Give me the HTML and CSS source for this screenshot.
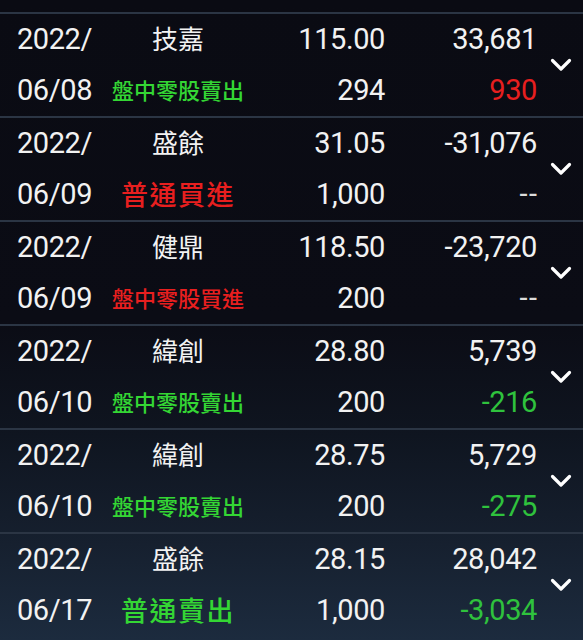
FILE: index.html
```html
<!DOCTYPE html>
<html lang="zh-Hant">
<head>
<meta charset="utf-8">
<title>交易紀錄</title>
<link rel="stylesheet" href="styles.css">
</head>
<body>
<div class="list">
  <div class="row">
    <div class="cell date">2022/</div>
    <div class="cell name">技嘉</div>
    <div class="cell num">115.00</div>
    <div class="cell num">33,681</div>
    <div class="chev"><svg width="22" height="14" viewBox="0 0 22 14"><polyline points="2.5,2.5 11,11 19.5,2.5" fill="none" stroke="#fff" stroke-width="3.2" stroke-linecap="round" stroke-linejoin="round"/></svg></div>
    <div class="cell date">06/08</div>
    <div class="cell type small green">盤中零股賣出</div>
    <div class="cell num">294</div>
    <div class="cell num red">930</div>
  </div>
  <div class="row">
    <div class="cell date">2022/</div>
    <div class="cell name">盛餘</div>
    <div class="cell num">31.05</div>
    <div class="cell num">-31,076</div>
    <div class="chev"><svg width="22" height="14" viewBox="0 0 22 14"><polyline points="2.5,2.5 11,11 19.5,2.5" fill="none" stroke="#fff" stroke-width="3.2" stroke-linecap="round" stroke-linejoin="round"/></svg></div>
    <div class="cell date">06/09</div>
    <div class="cell type big red">普通買進</div>
    <div class="cell num">1,000</div>
    <div class="cell num dim">--</div>
  </div>
  <div class="row">
    <div class="cell date">2022/</div>
    <div class="cell name">健鼎</div>
    <div class="cell num">118.50</div>
    <div class="cell num">-23,720</div>
    <div class="chev"><svg width="22" height="14" viewBox="0 0 22 14"><polyline points="2.5,2.5 11,11 19.5,2.5" fill="none" stroke="#fff" stroke-width="3.2" stroke-linecap="round" stroke-linejoin="round"/></svg></div>
    <div class="cell date">06/09</div>
    <div class="cell type small red">盤中零股買進</div>
    <div class="cell num">200</div>
    <div class="cell num dim">--</div>
  </div>
  <div class="row">
    <div class="cell date">2022/</div>
    <div class="cell name">緯創</div>
    <div class="cell num">28.80</div>
    <div class="cell num">5,739</div>
    <div class="chev"><svg width="22" height="14" viewBox="0 0 22 14"><polyline points="2.5,2.5 11,11 19.5,2.5" fill="none" stroke="#fff" stroke-width="3.2" stroke-linecap="round" stroke-linejoin="round"/></svg></div>
    <div class="cell date">06/10</div>
    <div class="cell type small green">盤中零股賣出</div>
    <div class="cell num">200</div>
    <div class="cell num green2">-216</div>
  </div>
  <div class="row">
    <div class="cell date">2022/</div>
    <div class="cell name">緯創</div>
    <div class="cell num">28.75</div>
    <div class="cell num">5,729</div>
    <div class="chev"><svg width="22" height="14" viewBox="0 0 22 14"><polyline points="2.5,2.5 11,11 19.5,2.5" fill="none" stroke="#fff" stroke-width="3.2" stroke-linecap="round" stroke-linejoin="round"/></svg></div>
    <div class="cell date">06/10</div>
    <div class="cell type small green">盤中零股賣出</div>
    <div class="cell num">200</div>
    <div class="cell num green2">-275</div>
  </div>
  <div class="row">
    <div class="cell date">2022/</div>
    <div class="cell name">盛餘</div>
    <div class="cell num">28.15</div>
    <div class="cell num">28,042</div>
    <div class="chev"><svg width="22" height="14" viewBox="0 0 22 14"><polyline points="2.5,2.5 11,11 19.5,2.5" fill="none" stroke="#fff" stroke-width="3.2" stroke-linecap="round" stroke-linejoin="round"/></svg></div>
    <div class="cell date">06/17</div>
    <div class="cell type big green">普通賣出</div>
    <div class="cell num">1,000</div>
    <div class="cell num green2">-3,034</div>
  </div>
</div>
</body>
</html>
```
FILE: styles.css
```css
html {
  height: 100%;
  background: #0a0b13;
}
body {
  margin: 0;
  min-height: 100%;
  padding-top: 12px;
  box-sizing: border-box;
  background: linear-gradient(to bottom, #0a0b13 0%, #0b0c15 50%, #0f1520 68%, #16202f 85%, #1c2b3e 100%);
  color: #f2f2f2;
  font-family: Roboto, "Noto Sans CJK TC", sans-serif;
  overflow: hidden;
}
.list {
  display: flex;
  flex-direction: column;
}
.row {
  display: grid;
  grid-template-columns: 109px 138px 138px 152px 1fr;
  grid-template-rows: 51px 51px;
  border-top: 2px solid #2b3544;
}
.cell {
  display: flex;
  align-items: center;
  white-space: nowrap;
  line-height: 1;
}
.date {
  justify-content: center;
  font-size: 29px;
  letter-spacing: -0.4px;
}
.name {
  justify-content: center;
  font-family: "Noto Sans CJK TC", sans-serif;
  font-size: 26px;
  padding-bottom: 3px;
}
.num {
  justify-content: flex-end;
  font-size: 29px;
  letter-spacing: -0.4px;
}
.type {
  justify-content: center;
  font-family: "Noto Sans CJK TC", sans-serif;
  font-weight: 500;
  padding-bottom: 3px;
}
.small {
  font-size: 22px;
}
.big {
  font-size: 27px;
  letter-spacing: 1.5px;
}
.green { color: #34d634; }
.green2 { color: #2fc23d; }
.red { color: #e81f1f; }
.dim {
  color: #dcdcdc;
  letter-spacing: 1.5px;
  margin-right: -1.5px;
}
.chev {
  grid-column: 5;
  grid-row: 1 / span 2;
  display: flex;
  align-items: center;
  justify-content: center;
  padding-left: 2px;
}
.chev svg { display: block; }
```
